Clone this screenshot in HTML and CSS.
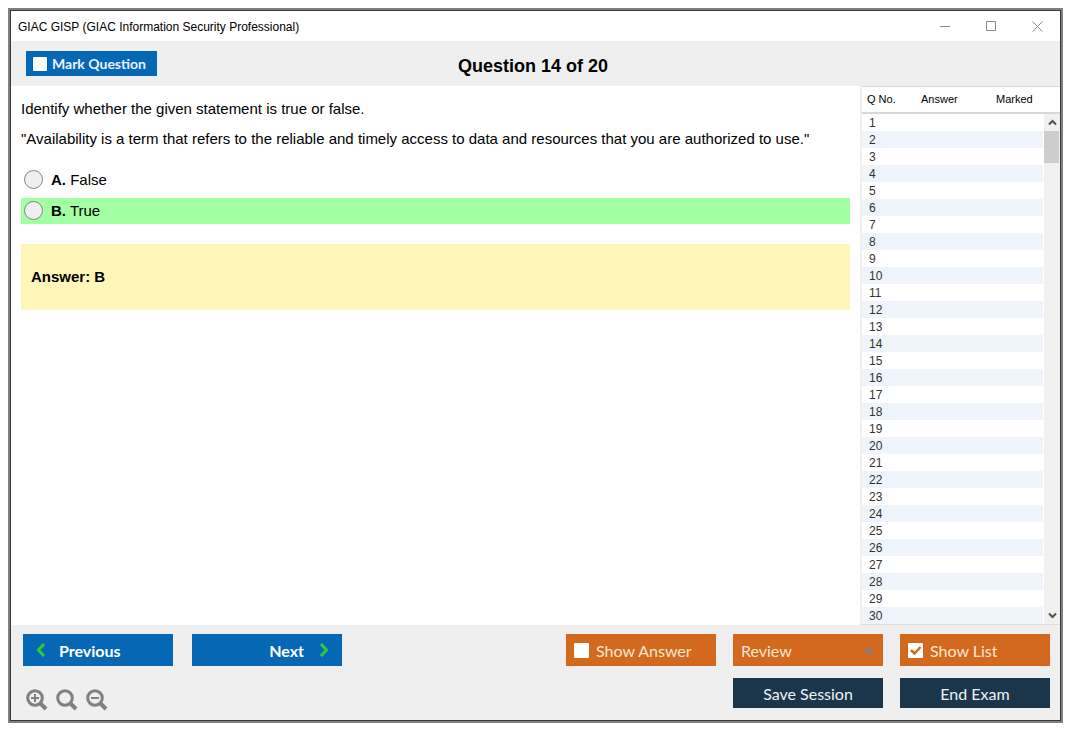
FILE: index.html
```html
<!DOCTYPE html>
<html lang="en">
<head>
    <meta charset="UTF-8">
    <meta name="viewport" content="width=device-width, initial-scale=1.0">
    <title>GIAC GISP (GIAC Information Security Professional)</title>
    <link rel="stylesheet" href="styles.css">
</head>
<body>
    <div class="window">
        <header class="titlebar">
            <span class="titlebar-text">GIAC GISP (GIAC Information Security Professional)</span>
            <div class="window-controls">
                <button aria-label="Minimize"><svg width="11" height="11" viewBox="0 0 11 11"><path d="M0 5.5h10"/></svg></button>
                <button aria-label="Maximize"><svg width="11" height="11" viewBox="0 0 11 11"><path d="M.5.5h9v9h-9z"/></svg></button>
                <button aria-label="Close"><svg width="11" height="11" viewBox="0 0 11 11"><path d="M.5.5l10 10M10.5.5l-10 10"/></svg></button>
            </div>
        </header>

        <div class="toolbar">
            <label class="mark"><input type="checkbox" class="check small">Mark Question</label>
            <h1>Question 14 of 20</h1>
        </div>

        <main class="content">
            <section class="question">
                <p>Identify whether the given statement is true or false.</p>
                <p>"Availability is a term that refers to the reliable and timely access to data and resources that you are authorized to use."</p>
                <div class="options">
                    <label class="option"><input type="radio" name="answer"><span><b>A.</b> False</span></label>
                    <label class="option correct"><input type="radio" name="answer"><span><b>B.</b> True</span></label>
                </div>
                <div class="answer">Answer: B</div>
            </section>

            <aside class="list">
                <table>
                    <thead>
                        <tr><th class="col-no">Q No.</th><th class="col-answer">Answer</th><th>Marked</th></tr>
                    </thead>
                    <tbody id="rows"></tbody>
                </table>
                <div class="scrollbar">
                    <button aria-label="Scroll up"><svg width="9" height="7" viewBox="0 0 9 7"><path d="M1 5.5l3.5-3.5L8 5.5"/></svg></button>
                    <div class="thumb"></div>
                    <button aria-label="Scroll down"><svg width="9" height="7" viewBox="0 0 9 7"><path d="M1 1.5L4.5 5L8 1.5"/></svg></button>
                </div>
            </aside>
        </main>

        <footer class="footer">
            <div class="left">
                <div class="nav">
                    <button class="btn blue previous">
                        <svg width="10" height="16" viewBox="0 0 10 16"><path d="M8 2L2.5 8L8 14"/></svg>
                        Previous
                    </button>
                    <button class="btn blue next">
                        Next
                        <svg width="10" height="16" viewBox="0 0 10 16"><path d="M2 2l5.5 6L2 14"/></svg>
                    </button>
                </div>
                <div class="zoom">
                    <button aria-label="Zoom in"><svg width="22" height="22" viewBox="0 0 22 22"><circle cx="9" cy="9" r="7.3"/><path d="M14 14l6 6" class="handle"/><path d="M5 9h8M9 5v8" class="sign"/></svg></button>
                    <button aria-label="Reset zoom"><svg width="22" height="22" viewBox="0 0 22 22"><circle cx="9" cy="9" r="7.3"/><path d="M14 14l6 6" class="handle"/></svg></button>
                    <button aria-label="Zoom out"><svg width="22" height="22" viewBox="0 0 22 22"><circle cx="9" cy="9" r="7.3"/><path d="M14 14l6 6" class="handle"/><path d="M5 9h8" class="sign"/></svg></button>
                </div>
            </div>
            <div class="actions">
                <label class="btn orange"><input type="checkbox" class="check">Show Answer</label>
                <button class="btn orange review" aria-haspopup="true">Review <span class="arrow"></span></button>
                <label class="btn orange"><input type="checkbox" class="check" checked>Show List</label>
                <button class="btn dark save">Save Session</button>
                <button class="btn dark">End Exam</button>
            </div>
        </footer>
    </div>

    <script>
        const rows = document.getElementById('rows');
        for (let i = 1; i <= 30; i++) {
            const row = rows.insertRow();
            row.insertCell().textContent = i;
            row.insertCell();
            row.insertCell();
        }
    </script>
</body>
</html>
```
FILE: styles.css
```css
* {
    margin: 0;
    padding: 0;
    box-sizing: border-box;
}

body {
    display: flex;
    min-height: 100vh;
    padding: 8px 12px 12px 8px;
    background: #ffffff;
    color: #000000;
    font-family: "Liberation Sans", Arial, sans-serif;
    font-size: 15px;
}

button {
    border: none;
    background: none;
    font: inherit;
    color: inherit;
    cursor: pointer;
}

svg {
    display: block;
    fill: none;
}

.window {
    flex: 1;
    display: flex;
    flex-direction: column;
    border: 2px solid #808080;
    outline: 1px solid #38383a;
    outline-offset: -3px;
    padding: 1px;
}

.titlebar {
    display: flex;
    justify-content: space-between;
    height: 30px;
    padding-left: 7px;
    font-size: 12px;
    line-height: 32px;
}

.window-controls {
    display: flex;
}

.window-controls button {
    display: grid;
    place-items: center;
    width: 46px;
}

.window-controls svg {
    stroke: #8c8c8c;
}

.toolbar {
    display: grid;
    grid-template-columns: 1fr auto 1fr;
    align-items: center;
    height: 45px;
    padding: 0 20px 0 15px;
    background: #efefef;
}

.toolbar h1 {
    font-size: 18px;
    line-height: 28px;
    padding-top: 4px;
}

.mark {
    justify-self: start;
    display: flex;
    align-items: center;
    gap: 5px;
    height: 25px;
    padding: 0 11px 0 7px;
    background: #0667b5;
    color: #e9f3fb;
    font: bold 14px Lato, sans-serif;
}

.check {
    appearance: none;
    width: 15px;
    height: 15px;
    border-radius: 1px;
    background: #ffffff;
}

.check.small {
    width: 14px;
    height: 14px;
}

.check:checked {
    background: #ffffff url("data:image/svg+xml,%3Csvg xmlns='http://www.w3.org/2000/svg' viewBox='0 0 15 15'%3E%3Cpath d='M3 7l3.5 3.5L12.5 4' fill='none' stroke='%23d2691e' stroke-width='2.5'/%3E%3C/svg%3E");
}

.content {
    flex: 1;
    display: flex;
}

.question {
    flex: 1;
    padding: 8px 10px;
}

.question p {
    line-height: 30px;
}

.options {
    display: flex;
    flex-direction: column;
    gap: 5px;
    margin: 13px 0 20px;
}

.option {
    display: flex;
    align-items: center;
    gap: 8px;
    height: 26px;
    padding: 0 3px 1px;
}

.option input {
    appearance: none;
    width: 19px;
    height: 19px;
    border: 1px solid #858585;
    border-radius: 50%;
    background: #efefef;
}

.correct {
    background: #a2ffa2;
}

.answer {
    padding: 24px 10px;
    background: #fff7b9;
    font-weight: bold;
    line-height: 18px;
}

.list {
    position: relative;
    width: 200px;
    border-left: 2px solid #f0f0f0;
    border-bottom: 1px solid #dcdcdc;
    font-size: 12px;
}

.list table {
    width: 100%;
    border-collapse: separate;
    border-spacing: 0;
    table-layout: fixed;
}

.list th {
    height: 28px;
    border-top: 1px solid #d8d8d8;
    border-bottom: 2px solid #d8d8d8;
    font-size: 11px;
    font-weight: normal;
    text-align: left;
    padding: 0 0 2px 5px;
}

.col-no {
    width: 54px;
}

.col-answer {
    width: 75px;
}

.list td {
    height: 17px;
    padding: 1px 0 0 7px;
    color: #333333;
    line-height: 16px;
}

.list tbody tr:nth-child(even) {
    background: #eef4f9;
}

.scrollbar {
    position: absolute;
    top: 28px;
    right: 0;
    bottom: 0;
    width: 17px;
    display: flex;
    flex-direction: column;
    background: #f0f0f0;
    border-left: 1px solid #ffffff;
}

.scrollbar button {
    display: grid;
    place-items: center;
    height: 17px;
}

.scrollbar button:last-child {
    margin-top: auto;
}

.scrollbar svg {
    stroke: #505050;
    stroke-width: 2;
}

.thumb {
    height: 32px;
    margin-right: 1px;
    background: #cdcdcd;
}

.footer {
    display: flex;
    justify-content: space-between;
    padding: 9px 10px 9px 12px;
    background: #efefef;
}

.nav {
    display: flex;
    gap: 19px;
}

.btn {
    display: flex;
    align-items: center;
    width: 150px;
    height: 32px;
    font-family: Lato, sans-serif;
    font-size: 16px;
    cursor: pointer;
}

.blue {
    background: #0667b5;
    color: #ffffff;
    font-weight: bold;
}

.blue svg {
    stroke: #2fcc3a;
    stroke-width: 3;
}

.previous {
    padding-left: 13px;
    gap: 13px;
}

.next {
    justify-content: flex-end;
    padding-right: 13px;
    gap: 15px;
}

.zoom {
    display: flex;
    gap: 8px;
    padding: 23px 0 0 3px;
}

.zoom svg {
    stroke: #808080;
    stroke-width: 3;
}

.zoom .handle {
    stroke-width: 4;
}

.zoom .sign {
    stroke-width: 2;
}

.actions {
    display: grid;
    grid-template-columns: repeat(3, 150px);
    align-content: start;
    column-gap: 17px;
    row-gap: 12px;
}

.orange {
    gap: 7px;
    padding: 0 8px;
    background: #d2691e;
    color: #fbe6d6;
}

.review {
    justify-content: space-between;
}

.arrow {
    border: 6px solid transparent;
    border-top: none;
    border-bottom-color: #85807c;
}

.dark {
    justify-content: center;
    height: 30px;
    background: #1b364b;
    color: #eef2f5;
}

.save {
    grid-column: 2;
}
```
